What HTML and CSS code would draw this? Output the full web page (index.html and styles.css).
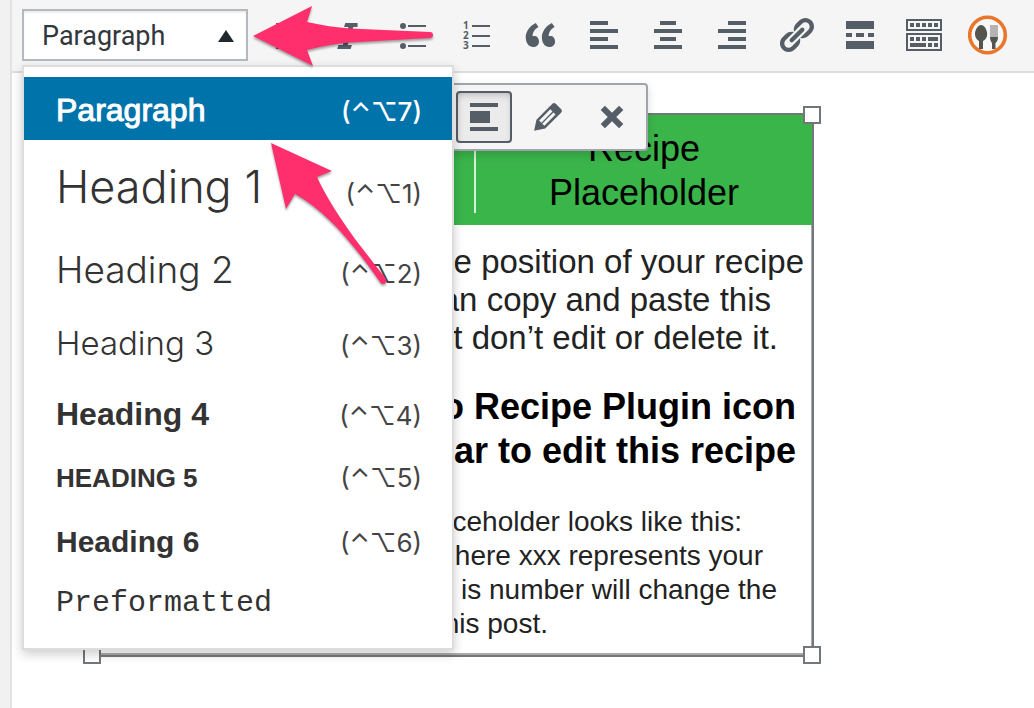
FILE: index.html
```html
<!DOCTYPE html>
<html lang="en">
<head>
<meta charset="utf-8">
<title>Edit Post</title>
<link rel="stylesheet" href="styles.css">
</head>
<body>
<main class="editor">
  <div class="toolbar" role="toolbar" aria-label="Formatting">
    <div class="format">
      <button class="format-button" type="button" aria-haspopup="true" aria-expanded="true">
        <span>Paragraph</span>
        <svg class="caret" viewBox="0 0 16 12" aria-hidden="true"><path d="M8 0l8 12H0z"/></svg>
      </button>
      <div class="menu" role="menu">
        <button class="item active" type="button" role="menuitem"><span class="label">Paragraph</span><span class="keys">(⌃⌥7)</span></button>
        <button class="item h1" type="button" role="menuitem"><span class="label">Heading 1</span><span class="keys">(⌃⌥1)</span></button>
        <button class="item h2" type="button" role="menuitem"><span class="label">Heading 2</span><span class="keys">(⌃⌥2)</span></button>
        <button class="item h3" type="button" role="menuitem"><span class="label">Heading 3</span><span class="keys">(⌃⌥3)</span></button>
        <button class="item h4" type="button" role="menuitem"><span class="label">Heading 4</span><span class="keys">(⌃⌥4)</span></button>
        <button class="item h5" type="button" role="menuitem"><span class="label">HEADING 5</span><span class="keys">(⌃⌥5)</span></button>
        <button class="item h6" type="button" role="menuitem"><span class="label">Heading 6</span><span class="keys">(⌃⌥6)</span></button>
        <button class="item pre" type="button" role="menuitem"><span class="label">Preformatted</span></button>
      </div>
    </div>
    <div class="tools">
      <button class="tool" type="button" aria-label="Bold"><svg class="icon" viewBox="0 0 20 20"><path fill-rule="evenodd" d="M6 4v13h4.54c1.37 0 2.46-.33 3.26-1 .8-.66 1.2-1.58 1.2-2.77 0-.84-.17-1.51-.51-2.01s-.9-.85-1.67-1.03v-.09c.57-.1 1.02-.4 1.36-.9s.51-1.13.51-1.91c0-1.14-.39-1.98-1.17-2.5C12.75 4.26 11.5 4 9.78 4H6zm2.57 5.15V6.26h1.36c.73 0 1.27.11 1.61.32.34.22.51.58.51 1.07 0 .54-.16.92-.47 1.15s-.82.35-1.51.35h-1.5zm0 2.19h1.6c1.44 0 2.16.53 2.16 1.61 0 .6-.17 1.05-.51 1.34s-.86.43-1.57.43H8.57v-3.38z"/></svg></button>
      <button class="tool" type="button" aria-label="Italic"><svg class="icon" viewBox="0 0 20 20"><path d="M14.78 4h-6.13l-.62 2h2.13l-2.8 9H5.220l-.62 2h6.750l.62-2H9.850l2.800-9h2.130z"/></svg></button>
      <button class="tool" type="button" aria-label="Bulleted list"><svg class="icon" viewBox="0 0 40 40"><circle cx="11" cy="11" r="3"/><circle cx="11" cy="21" r="3"/><circle cx="11" cy="31" r="3"/><path d="M16 10h18v2H16zM16 20h18v2H16zM16 30h18v2H16z"/></svg></button>
      <button class="tool" type="button" aria-label="Numbered list"><svg class="icon" viewBox="0 0 40 40"><g class="digits"><text x="7" y="14">1</text><text x="7" y="24">2</text><text x="7" y="34">3</text></g><path d="M16 10h18v2H16zM16 20h18v2H16zM16 30h18v2H16z"/></svg></button>
      <button class="tool" type="button" aria-label="Blockquote"><svg class="icon" viewBox="0 0 20 20"><path d="M9.49 13.22c0-.74-.2-1.38-.61-1.9-.62-.78-1.83-.88-2.53-.72-.29-1.65 1.11-3.75 2.92-4.65L7.88 4c-2.73 1.3-5.42 4.28-4.96 8.05C3.21 14.43 4.59 16 6.54 16c.85 0 1.56-.25 2.12-.75s.83-1.18.83-2.03zm8.05 0c0-.74-.2-1.38-.61-1.9-.63-.78-1.83-.88-2.53-.72-.29-1.65 1.11-3.75 2.92-4.65L15.93 4c-2.73 1.3-5.41 4.28-4.95 8.05.29 2.38 1.66 3.95 3.61 3.95.85 0 1.56-.25 2.12-.75s.83-1.18.83-2.03z"/></svg></button>
      <button class="tool" type="button" aria-label="Align left"><svg class="icon" viewBox="0 0 40 40"><path d="M6 6h18v4H6zM6 14h28v4H6zM6 22h18v4H6zM6 30h28v4H6z"/></svg></button>
      <button class="tool" type="button" aria-label="Align center"><svg class="icon" viewBox="0 0 40 40"><path d="M12 6h16v4H12zM6 14h28v4H6zM12 22h16v4H12zM6 30h28v4H6z"/></svg></button>
      <button class="tool" type="button" aria-label="Align right"><svg class="icon" viewBox="0 0 40 40"><path d="M16 6h18v4H16zM6 14h28v4H6zM16 22h18v4H16zM6 30h28v4H6z"/></svg></button>
      <button class="tool" type="button" aria-label="Insert link"><svg class="icon" viewBox="0 0 20 20"><path d="M17.74 2.76c1.68 1.69 1.68 4.41 0 6.1l-1.53 1.52c-1.12 1.12-2.7 1.47-4.14 1.09l2.62-2.61.76-.77.76-.76c.84-.84.84-2.2 0-3.04-.84-.85-2.2-.85-3.04 0l-.77.76-3.38 3.38c-.37-1.44-.02-3.02 1.1-4.14l1.52-1.53c1.69-1.68 4.42-1.68 6.1 0zM8.59 13.43l5.34-5.34c.42-.42.42-1.1 0-1.52-.44-.43-1.13-.39-1.53 0l-5.33 5.34c-.42.42-.42 1.1 0 1.52.44.43 1.13.39 1.52 0zm-.76 2.29l4.14-4.15c.38 1.44.03 3.02-1.09 4.14l-1.52 1.53c-1.69 1.68-4.41 1.68-6.1 0-1.68-1.68-1.68-4.42 0-6.1l1.53-1.52c1.12-1.12 2.7-1.47 4.14-1.1l-4.14 4.15c-.85.84-.85 2.2 0 3.05.84.84 2.2.84 3.04 0z"/></svg></button>
      <button class="tool" type="button" aria-label="Read more"><svg class="icon" viewBox="0 0 40 40"><path d="M6 6h28v8H6zM6 18h6v4H6zM16 18h8v4h-8zM28 18h6v4h-6zM6 26h28v8H6z"/></svg></button>
      <button class="tool" type="button" aria-label="Toolbar toggle"><svg class="icon" viewBox="0 0 40 40"><path fill-rule="evenodd" d="M2 4h36v12H2zM4 6v8h32V6zM2 18h36v18H2zM4 20v14h32V20z"/><path d="M6 8h4v4H6zM12 8h4v4h-4zM18 8h4v4h-4zM24 8h4v4h-4zM30 8h4v4h-4zM6 22h4v4H6zM12 22h4v4h-4zM18 22h4v4h-4zM24 22h10v4H24zM6 28h16v4H6zM24 28h4v4h-4zM30 28h4v4h-4z"/></svg></button>
      <button class="tool" type="button" aria-label="Recipe"><svg class="icon" viewBox="0 0 40 40"><circle cx="19.500" cy="20" r="17.800" fill="#f8f8f8" stroke="#ea762b" stroke-width="3.600"/><path fill="#55554f" d="M13 10c3.500 0 6.200 5 6.200 9 0 3.500-2 6-4.200 7v8h-4v-8c-2-1-4-3.500-4-7s2.500-9 6-9z"/><path fill="#b4b4b4" d="M22 10h8v13h-8z"/><path fill="#55554f" d="M22 22h8c0 3-1 5-2.500 6v6h-3.500v-6c-1-1-2-3-2-6z"/></svg></button>
    </div>
  </div>

  <section class="content">
    <figure class="recipe">
      <header class="recipe-head">
        <div class="recipe-title">Recipe<br>Placeholder</div>
      </header>
      <div class="recipe-body">
        <p class="intro"><span class="line end-s">he position of your recipe</span><span class="line end-l">an copy and paste this</span><span class="line end-m">ut don’t edit or delete it.</span></p>
        <p class="strong"><span class="line">o Recipe Plugin icon</span><span class="line">ar to edit this recipe</span></p>
        <p class="note"><span class="line n1">ceholder looks like this:</span><span class="line n2">here xxx represents your</span><span class="line n3">is number will change the</span><span class="line n4">his post.</span></p>
      </div>
      <i class="handle top-right"></i><i class="handle bottom-left"></i><i class="handle bottom-right"></i>
    </figure>
    <div class="image-bar" role="toolbar" aria-label="Image">
      <button class="image-tool pressed" type="button" aria-label="No alignment"><svg class="icon" viewBox="0 0 40 40"><path d="M6 6h28v4H6zM6 14h20v12H6zM6 30h28v4H6z"/></svg></button>
      <button class="image-tool" type="button" aria-label="Edit"><svg class="icon" viewBox="0 0 20 20"><path d="M13.890 3.390l2.710 2.720c.46.46.42 1.240.03 1.640l-8.010 8.020-5.560 1.160 1.160-5.580s7.600-7.630 7.990-8.030c.39-.39 1.220-.39 1.680.07zm-2.730 2.790l-5.590 5.610 1.110 1.110 5.540-5.650zm-2.970 8.230l5.580-5.600-1.070-1.080-5.590 5.600z"/></svg></button>
      <button class="image-tool" type="button" aria-label="Remove"><svg class="icon" viewBox="0 0 20 20"><path d="M12.120 10l3.530 3.530-2.120 2.120L10 12.120l-3.540 3.540-2.120-2.120L7.880 10 4.340 6.460l2.120-2.120L10 7.880l3.540-3.530 2.120 2.120z"/></svg></button>
    </div>
  </section>
</main>
<svg class="arrows" width="460" height="300" viewBox="0 0 460 300" aria-hidden="true">
  <path d="M253 36L312 6L307 22Q330 27 350 28.500L430 32Q433 32 433 35Q433 38 430 38L350 42.500Q330 44 307 50L313 66Z"/>
  <path d="M271 143L332 171L317 177C325 195 340 218 355 239L386 279Q387 284 383 284Q381 284 380 282C352 242 326 211 295 194L286 209Z"/>
</svg>
</body>
</html>
```
FILE: styles.css
```css
* { box-sizing: border-box; }

body {
  margin: 0;
  background: #f1f1f1;
  color: #32373c;
  font-family: "Liberation Sans", Arial, sans-serif;
}

button {
  margin: 0;
  padding: 0;
  border: 0;
  background: none;
  color: inherit;
  font: inherit;
}

.editor {
  min-height: 100vh;
  margin-left: 10px;
  border-left: 2px solid #e2e2e2;
  background: #fff;
}

.toolbar {
  display: flex;
  gap: 4px;
  padding: 9px 10px 10px;
  border-bottom: 2px solid #ddd;
  background: #f5f5f5;
}

.format { position: relative; }

.format-button {
  display: flex;
  align-items: center;
  justify-content: space-between;
  width: 226px;
  height: 52px;
  padding: 2px 12px 0 18px;
  border: 2px solid #b4b9be;
  background: #fff;
  box-shadow: inset 0 2px 2px #eee;
  color: #32373c;
  font-family: Roboto, sans-serif;
  font-size: 27px;
}

.caret { width: 16px; height: 12px; fill: #23282d; }

.tools { display: flex; align-items: center; }

.tool {
  display: flex;
  justify-content: center;
  width: 64px;
}

.icon { display: block; width: 40px; height: 40px; fill: #555d66; }

.digits { font: bold 10px "Open Sans", sans-serif; }

.menu {
  position: absolute;
  z-index: 3;
  top: 56px;
  left: 0;
  width: 432px;
  padding: 10px 0 18px;
  border: 2px solid #ddd;
  background: #fff;
  box-shadow: 0 4px 10px rgba(0, 0, 0, 0.2);
  color: #333;
}

.item {
  display: flex;
  align-items: baseline;
  justify-content: space-between;
  width: 100%;
  padding: 0 30px 0 32px;
  font-size: 32px;
  text-align: left;
}

.active {
  padding-top: 3px;
  background: #0073aa;
  color: #fff;
  line-height: 60px;
  -webkit-text-stroke: 1px #fff;
}

.h1, .h2, .h3 { font-family: Inter, sans-serif; font-weight: 300; }
.h1 { font-size: 45px; line-height: 94px; }
.h2 { font-size: 37px; line-height: 72px; }
.h3 { font-size: 33px; line-height: 74px; }
.h4, .h5, .h6 { font-weight: 700; }
.h4 { line-height: 68px; }
.h5 { font-size: 26px; line-height: 60px; }
.h6 { font-size: 30px; line-height: 68px; }
.pre { font-family: "Liberation Mono", monospace; font-size: 30px; line-height: 54px; }

.keys {
  color: #444;
  font: 400 26px/30px Inter, "DejaVu Sans", sans-serif;
}

.active .keys {
  color: #fff;
  font-weight: 500;
  -webkit-text-stroke: 0;
}

.content {
  position: relative;
  padding: 40px 80px;
}

.recipe {
  position: relative;
  width: 722px;
  margin: 0;
  border: 2px solid #72777c;
  box-shadow: inset -1px -2px 0 #aaa;
  color: #222;
}

.recipe-head {
  display: flex;
  justify-content: flex-end;
  height: 110px;
  padding: 12px 0;
  background: #3ab54a;
}

.recipe-title {
  width: 338px;
  border-left: 2px solid #d5efd8;
  color: #000;
  font-size: 36px;
  line-height: 44px;
  text-align: center;
}

.recipe-body { padding: 18px 8px 14px; }
.recipe-body p { margin: 0; text-align: right; }
.line { display: block; }

.intro { font-size: 33px; line-height: 38px; }
.end-l { padding-right: 33px; }
.end-m { padding-right: 26px; }

.recipe-body .strong {
  margin: 28px 0 32px;
  padding-right: 8px;
  color: #000;
  font-size: 36px;
  font-weight: 700;
  line-height: 44px;
}

.note { font-size: 28px; line-height: 34px; }
.n1 { padding-right: 62px; }
.n2 { padding-right: 41px; }
.n3 { padding-right: 27px; }
.n4 { padding-right: 256px; }

.handle {
  position: absolute;
  width: 18px;
  height: 18px;
  border: 2px solid #72777c;
  background: #fff;
}

.top-right { top: -9px; right: -9px; }
.bottom-left { bottom: -9px; left: -11px; }
.bottom-right { right: -9px; bottom: -9px; }

.image-bar {
  position: absolute;
  z-index: 2;
  top: 10px;
  left: 434px;
  display: flex;
  gap: 8px;
  padding: 6px 6px 6px 8px;
  border: 2px solid #a0a5aa;
  border-radius: 4px;
  background: #f5f5f5;
  box-shadow: 0 4px 8px rgba(0, 0, 0, 0.15);
}

.image-tool {
  display: flex;
  align-items: center;
  justify-content: center;
  width: 56px;
  height: 52px;
}

.pressed {
  border: 2px solid #555d66;
  border-radius: 4px;
  background: #ebebeb;
  box-shadow: inset 0 4px 8px -4px rgba(0, 0, 0, 0.3);
}

.arrows {
  position: absolute;
  z-index: 4;
  top: 0;
  left: 0;
  fill: #ff2f6d;
  filter: drop-shadow(0 2px 1px rgba(0, 0, 0, 0.35));
  pointer-events: none;
}
```
